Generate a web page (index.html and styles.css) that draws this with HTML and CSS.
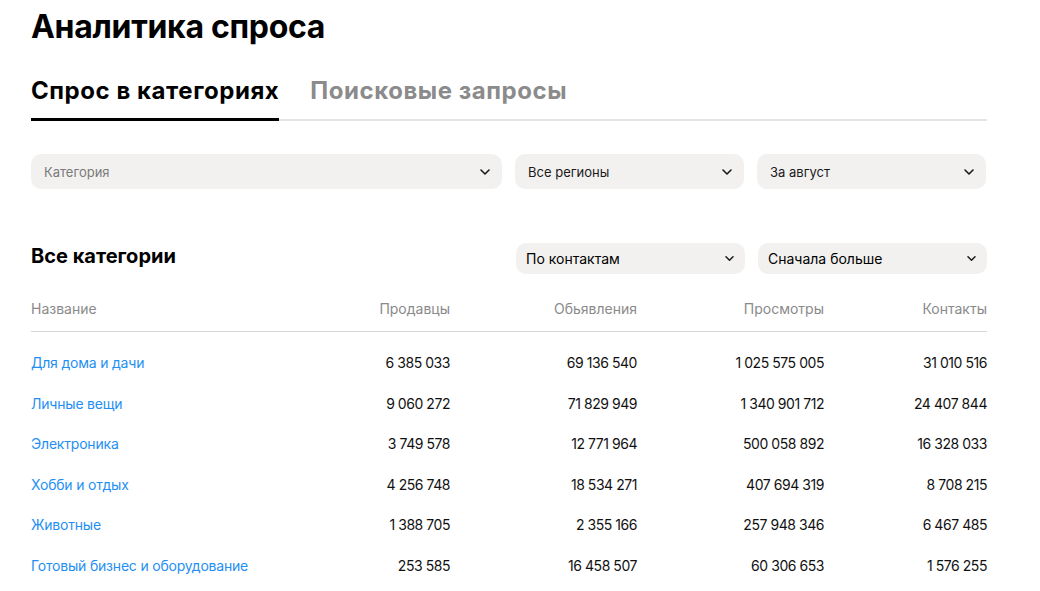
FILE: index.html
```html
<!DOCTYPE html>
<html lang="ru">
<head>
<meta charset="utf-8">
<title>Аналитика спроса</title>
<link rel="stylesheet" href="styles.css">
</head>
<body>
<main class="page">
  <h1 class="title">Аналитика спроса</h1>

  <nav class="tabs">
    <span class="tab tab-active">Спрос в категориях</span>
    <span class="tab">Поисковые запросы</span>
  </nav>

  <div class="filters">
    <div class="select select-wide select-placeholder">
      <span>Категория</span>
      <svg class="chev" viewBox="0 0 10 6" width="10" height="6"><path d="M1 1l4 4 4-4" fill="none" stroke="#1a1a1a" stroke-width="1.6" stroke-linecap="round" stroke-linejoin="round"/></svg>
    </div>
    <div class="select">
      <span>Все регионы</span>
      <svg class="chev" viewBox="0 0 10 6" width="10" height="6"><path d="M1 1l4 4 4-4" fill="none" stroke="#1a1a1a" stroke-width="1.6" stroke-linecap="round" stroke-linejoin="round"/></svg>
    </div>
    <div class="select">
      <span>За август</span>
      <svg class="chev" viewBox="0 0 10 6" width="10" height="6"><path d="M1 1l4 4 4-4" fill="none" stroke="#1a1a1a" stroke-width="1.6" stroke-linecap="round" stroke-linejoin="round"/></svg>
    </div>
  </div>

  <section class="section">
    <div class="section-head">
      <h2 class="section-title">Все категории</h2>
      <div class="sorts">
        <div class="select select-sm">
          <span>По контактам</span>
          <svg class="chev-sm" viewBox="0 0 9 5" width="9" height="5"><path d="M1 0.8l3.5 3.4 3.5-3.4" fill="none" stroke="#1a1a1a" stroke-width="1.5" stroke-linecap="round" stroke-linejoin="round"/></svg>
        </div>
        <div class="select select-sm">
          <span>Сначала больше</span>
          <svg class="chev-sm" viewBox="0 0 9 5" width="9" height="5"><path d="M1 0.8l3.5 3.4 3.5-3.4" fill="none" stroke="#1a1a1a" stroke-width="1.5" stroke-linecap="round" stroke-linejoin="round"/></svg>
        </div>
      </div>
    </div>

    <div class="table">
      <div class="row head">
        <span class="c-name">Название</span>
        <span class="c-num">Продавцы</span>
        <span class="c-num">Обьявления</span>
        <span class="c-num">Просмотры</span>
        <span class="c-num">Контакты</span>
      </div>
      <div class="body">
        <div class="row">
          <a class="c-name link">Для дома и дачи</a>
          <span class="c-num">6 385 033</span>
          <span class="c-num">69 136 540</span>
          <span class="c-num">1 025 575 005</span>
          <span class="c-num">31 010 516</span>
        </div>
        <div class="row">
          <a class="c-name link">Личные вещи</a>
          <span class="c-num">9 060 272</span>
          <span class="c-num">71 829 949</span>
          <span class="c-num">1 340 901 712</span>
          <span class="c-num">24 407 844</span>
        </div>
        <div class="row">
          <a class="c-name link">Электроника</a>
          <span class="c-num">3 749 578</span>
          <span class="c-num">12 771 964</span>
          <span class="c-num">500 058 892</span>
          <span class="c-num">16 328 033</span>
        </div>
        <div class="row">
          <a class="c-name link">Хобби и отдых</a>
          <span class="c-num">4 256 748</span>
          <span class="c-num">18 534 271</span>
          <span class="c-num">407 694 319</span>
          <span class="c-num">8 708 215</span>
        </div>
        <div class="row">
          <a class="c-name link">Животные</a>
          <span class="c-num">1 388 705</span>
          <span class="c-num">2 355 166</span>
          <span class="c-num">257 948 346</span>
          <span class="c-num">6 467 485</span>
        </div>
        <div class="row">
          <a class="c-name link">Готовый бизнес и оборудование</a>
          <span class="c-num">253 585</span>
          <span class="c-num">16 458 507</span>
          <span class="c-num">60 306 653</span>
          <span class="c-num">1 576 255</span>
        </div>
      </div>
    </div>
  </section>
</main>
</body>
</html>
```

FILE: styles.css
```css
* { box-sizing: border-box; }

html, body {
  margin: 0;
  padding: 0;
  background: #ffffff;
}

body {
  font-family: Inter, "Noto Sans", "Liberation Sans", sans-serif;
  color: #1a1a1a;
  overflow: hidden;
}

.page {
  width: 956px;
  margin-left: 31px;
  padding-top: 8px;
}

.title {
  margin: 0;
  font-size: 32px;
  line-height: 38px;
  font-weight: 700;
  letter-spacing: -0.3px;
  color: #000;
}

.tabs {
  display: flex;
  gap: 31px;
  margin-top: 30px;
  border-bottom: 2px solid #e3e3e3;
}

.tab {
  font-size: 24px;
  line-height: 30px;
  font-weight: 700;
  letter-spacing: 0.55px;
  color: #8b8b8b;
  padding-bottom: 12px;
}

.tab-active {
  color: #000;
  border-bottom: 3px solid #000;
  margin-bottom: -2px;
}

.filters {
  display: flex;
  gap: 13px;
  margin-top: 33px;
}

.select {
  flex: 0 0 229px;
  height: 35px;
  display: flex;
  align-items: center;
  justify-content: space-between;
  padding: 0 12px 0 13px;
  background: #f2f1f0;
  border-radius: 10px;
  font-size: 13px;
  color: #1a1a1a;
}

.select-wide {
  flex: 0 0 471px;
}

.select-placeholder {
  color: #7a7a7a;
}

.section {
  margin-top: 54px;
}

.section-head {
  display: flex;
  justify-content: space-between;
  align-items: flex-start;
}

.section-title {
  margin: 0;
  font-size: 20px;
  line-height: 26px;
  font-weight: 700;
  color: #000;
}

.sorts {
  display: flex;
  gap: 13px;
}

.select-sm {
  height: 31px;
  font-size: 14px;
  padding: 0 11px 0 10px;
  color: #000;
}

.table {
  margin-top: 25px;
}

.row {
  display: grid;
  grid-template-columns: 232px 187px 187px 187px 163px;
  align-items: center;
  font-size: 14px;
  line-height: 20px;
  padding: 10.3px 0;
}

.row.head {
  padding: 0 0 12px;
  border-bottom: 1px solid #d6d6d6;
  color: #8a8a8a;
}

.body {
  padding-top: 10.8px;
}

.c-name {
  text-align: left;
  white-space: nowrap;
}

.c-num {
  text-align: right;
  white-space: nowrap;
}

.body .c-num {
  letter-spacing: -0.45px;
  color: #111;
}

.link {
  color: #1f8ff3;
  text-decoration: none;
  letter-spacing: -0.2px;
}
```
